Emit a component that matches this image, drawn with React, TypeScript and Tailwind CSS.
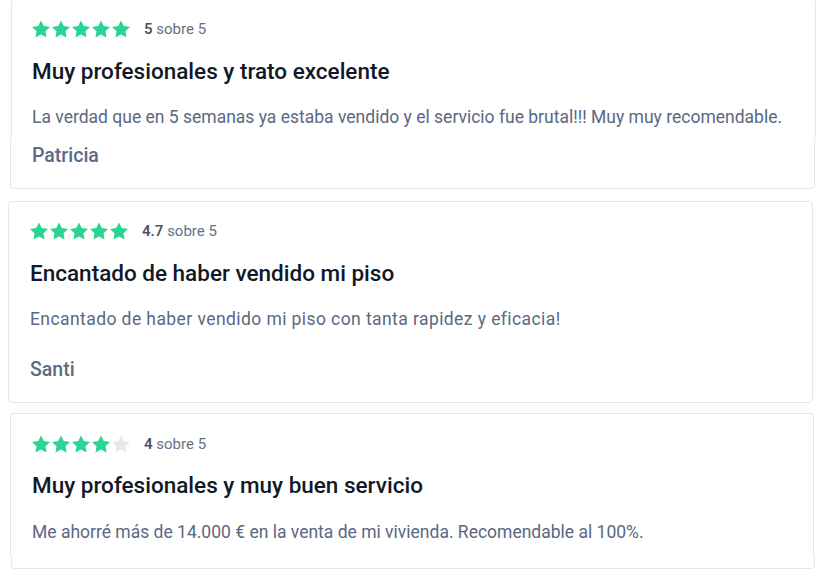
import React from 'react'

function Star({ filled }: { filled: boolean }) {
    return (
        <svg viewBox="2 2 20 19.1" className="w-[18px] h-[18px]">
            <polygon
                points="12,2 15.09,8.26 22,9.27 17,14.14 18.18,21.02 12,17.77 5.82,21.02 7,14.14 2,9.27 8.91,8.26"
                fill={filled ? '#2ad492' : '#e4e9ec'}
            />
        </svg>
    )
}

function Rating({ stars, score }: { stars: number; score: string }) {
    return (
        <div className="flex items-center h-[18px]">
            <div className="flex gap-[2px]">
                {[0, 1, 2, 3, 4].map(i => (
                    <Star key={i} filled={i < stars} />
                ))}
            </div>
            <p className="ml-[14px] text-[15px] leading-[18px] text-[#667085]">
                <span className="font-semibold text-[#4a5568]">{score}</span> sobre 5
            </p>
        </div>
    )
}

const titleCls = 'text-[22.5px] leading-[30px] font-medium text-[#111827]'
const bodyCls = 'text-[17.5px] leading-[26px] text-[#5a6882]'
const authorCls = 'text-[19.5px] leading-[28px] font-medium text-[#5b6b86]'

export default function App() {
    return (
        <div className="w-[834px] h-[577px] bg-white overflow-hidden font-['Roboto',sans-serif]">
            <div className="-mt-px flex flex-col">
                {/* Card 1 */}
                <div>
                    <div className="ml-[11px] w-[805px] border border-b-0 border-[#e2e8f0] rounded-t pl-[20px] pt-[20px] pb-[8px]">
                        <Rating stars={5} score="5" />
                        <h3 className={`mt-[18px] ${titleCls}`}>Muy profesionales y trato excelente</h3>
                        <p className={`mt-[18px] ${bodyCls}`}>La verdad que en 5 semanas ya estaba vendido y el servicio fue brutal!!! Muy muy recomendable.</p>
                    </div>
                    <div className="ml-[10px] w-[805px] border border-t-0 border-[#e2e8f0] rounded-b pl-[21px] pt-[4px] pb-[18px]">
                        <p className={authorCls}>Patricia</p>
                    </div>
                </div>

                {/* Card 2 */}
                <div className="mt-[12px] ml-[8px] w-[805px] border border-[#e2e8f0] rounded pl-[21px] pt-[20px] pb-[18px]">
                    <Rating stars={5} score="4.7" />
                    <h3 className={`mt-[18px] ${titleCls}`}>Encantado de haber vendido mi piso</h3>
                    <p className={`mt-[18px] tracking-[0.42px] ${bodyCls}`}>Encantado de haber vendido mi piso con tanta rapidez y eficacia!</p>
                    <p className={`mt-[24px] ${authorCls}`}>Santi</p>
                </div>

                {/* Card 3 */}
                <div className="mt-[10px]">
                    <div className="ml-[10px] w-[804px] border border-b-0 border-[#e2e8f0] rounded-t pl-[21px] pt-[21px] pb-[10px]">
                        <Rating stars={4} score="4" />
                        <h3 className={`mt-[17px] ${titleCls}`}>Muy profesionales y muy buen servicio</h3>
                        <p className={`mt-[19px] ${bodyCls}`}>Me ahorré más de 14.000 € en la venta de mi vivienda. Recomendable al 100%.</p>
                    </div>
                    <div className="ml-[11px] w-[804px] h-[14px] border border-t-0 border-[#e2e8f0] rounded-b" />
                </div>
            </div>
        </div>
    )
}
